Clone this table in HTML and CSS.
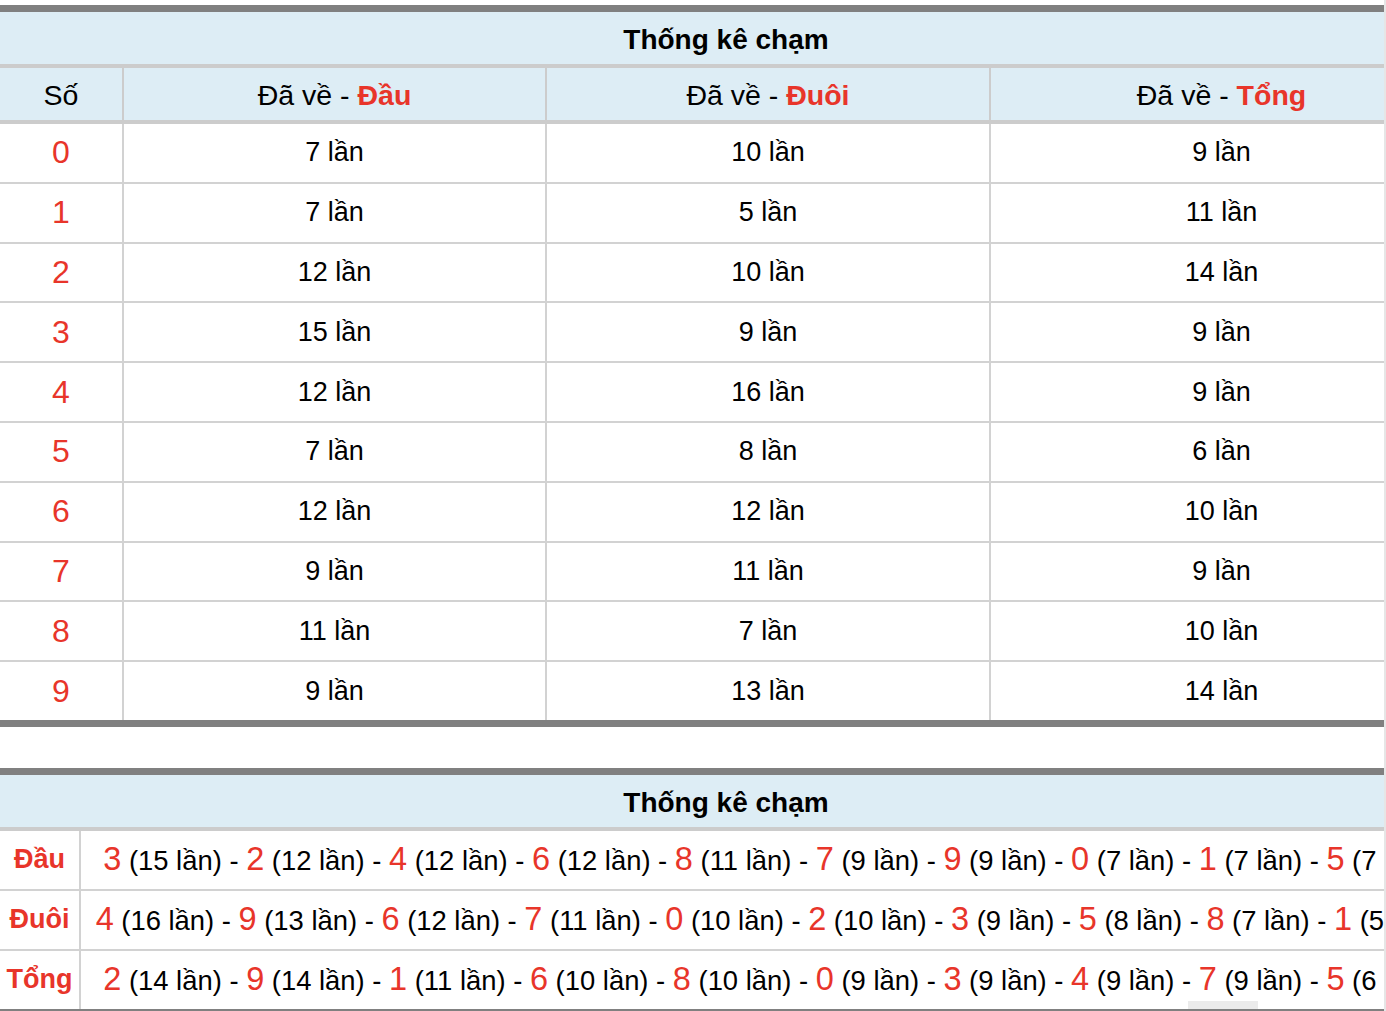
FILE: index.html
```html
<!DOCTYPE html>
<html lang="vi">
<head>
<meta charset="utf-8">
<title>Thống kê chạm</title>
<link rel="stylesheet" href="styles.css">
</head>
<body>
<div class="viewport">
  <div class="page">
    <table class="stat stat-main">
      <colgroup>
        <col class="c-so"><col class="c-dau"><col class="c-duoi"><col class="c-tong">
      </colgroup>
      <thead>
        <tr class="title-row"><th colspan="4">Thống kê chạm</th></tr>
        <tr class="head-row">
          <th>Số</th>
          <th>Đã về - <b class="red">Đầu</b></th>
          <th>Đã về - <b class="red">Đuôi</b></th>
          <th>Đã về - <b class="red">Tổng</b></th>
        </tr>
      </thead>
      <tbody>
        <tr><td class="num">0</td><td>7 lần</td><td>10 lần</td><td>9 lần</td></tr>
        <tr><td class="num">1</td><td>7 lần</td><td>5 lần</td><td>11 lần</td></tr>
        <tr><td class="num">2</td><td>12 lần</td><td>10 lần</td><td>14 lần</td></tr>
        <tr><td class="num">3</td><td>15 lần</td><td>9 lần</td><td>9 lần</td></tr>
        <tr><td class="num">4</td><td>12 lần</td><td>16 lần</td><td>9 lần</td></tr>
        <tr><td class="num">5</td><td>7 lần</td><td>8 lần</td><td>6 lần</td></tr>
        <tr><td class="num">6</td><td>12 lần</td><td>12 lần</td><td>10 lần</td></tr>
        <tr><td class="num">7</td><td>9 lần</td><td>11 lần</td><td>9 lần</td></tr>
        <tr><td class="num">8</td><td>11 lần</td><td>7 lần</td><td>10 lần</td></tr>
        <tr><td class="num">9</td><td>9 lần</td><td>13 lần</td><td>14 lần</td></tr>
      </tbody>
    </table>

    <table class="stat stat-list">
      <colgroup>
        <col class="c-label"><col class="c-list">
      </colgroup>
      <thead>
        <tr class="title-row"><th colspan="2">Thống kê chạm</th></tr>
      </thead>
      <tbody>
        <tr>
          <td class="label">Đầu</td>
          <td class="list"><span class="n">3</span> (15 lần) - <span class="n">2</span> (12 lần) - <span class="n">4</span> (12 lần) - <span class="n">6</span> (12 lần) - <span class="n">8</span> (11 lần) - <span class="n">7</span> (9 lần) - <span class="n">9</span> (9 lần) - <span class="n">0</span> (7 lần) - <span class="n">1</span> (7 lần) - <span class="n">5</span> (7 lần)</td>
        </tr>
        <tr>
          <td class="label">Đuôi</td>
          <td class="list"><span class="n">4</span> (16 lần) - <span class="n">9</span> (13 lần) - <span class="n">6</span> (12 lần) - <span class="n">7</span> (11 lần) - <span class="n">0</span> (10 lần) - <span class="n">2</span> (10 lần) - <span class="n">3</span> (9 lần) - <span class="n">5</span> (8 lần) - <span class="n">8</span> (7 lần) - <span class="n">1</span> (5 lần)</td>
        </tr>
        <tr>
          <td class="label">Tổng</td>
          <td class="list"><span class="n">2</span> (14 lần) - <span class="n">9</span> (14 lần) - <span class="n">1</span> (11 lần) - <span class="n">6</span> (10 lần) - <span class="n">8</span> (10 lần) - <span class="n">0</span> (9 lần) - <span class="n">3</span> (9 lần) - <span class="n">4</span> (9 lần) - <span class="n">7</span> (9 lần) - <span class="n">5</span> (6 lần)</td>
        </tr>
      </tbody>
    </table>
  </div>
  <div class="scroll-thumb"></div>
</div>
</body>
</html>
```

FILE: styles.css
```css
html, body {
  margin: 0;
  padding: 0;
  overflow: hidden;
  background: #ffffff;
}

.viewport {
  position: relative;
  width: 1384px;
  height: 1011px;
  overflow: hidden;
  border-right: 2px solid #e6e6e6;
}

.page {
  width: 1452px;
  padding-top: 5px;
  font-family: "Liberation Sans", Arial, Helvetica, sans-serif;
  font-size: 27px;
  color: #000;
}

.stat {
  width: 100%;
  border-collapse: collapse;
  table-layout: fixed;
  border-top: 7px solid #808080;
  border-bottom: 7px solid #808080;
}

.stat th,
.stat td {
  padding: 0;
  text-align: center;
  vertical-align: middle;
  white-space: nowrap;
}

.stat th {
  font-weight: normal;
  background: #ddedf5;
}

.title-row th {
  height: 48px;
  padding-top: 4px;
  font-size: 28px;
  font-weight: bold;
  border-bottom: 4px solid #cccccc;
}

.head-row th {
  height: 49px;
  padding-top: 3px;
  font-size: 28.5px;
  border-bottom: 4px solid #cccccc;
  border-left: 2px solid #cccccc;
}

.head-row th:first-child {
  border-left: none;
}

.stat td {
  height: 57.8px;
  border-top: 2px solid #d2d2d2;
  border-left: 2px solid #d2d2d2;
}

.stat td:first-child {
  border-left: none;
}

.stat tbody tr:first-child td {
  border-top: none;
}

.red {
  color: #e8352a;
  font-weight: bold;
}

.num {
  color: #e8352a;
  font-size: 32px;
}

.c-so { width: 123px; }
.c-dau { width: 423px; }
.c-duoi { width: 444px; }
.c-tong { width: 462px; }

.stat-list {
  margin-top: 41px;
}

.c-label { width: 80px; }
.c-list { width: 1372px; }

.stat-list td {
  height: 58px;
}

.label {
  color: #e8352a;
  font-weight: bold;
}

.list {
  font-size: 27.4px;
}

.n {
  color: #e8352a;
  font-size: 32.5px;
}

.scroll-thumb {
  position: absolute;
  left: 1188px;
  top: 1001px;
  width: 70px;
  height: 8px;
  background: #ebebeb;
}
```
